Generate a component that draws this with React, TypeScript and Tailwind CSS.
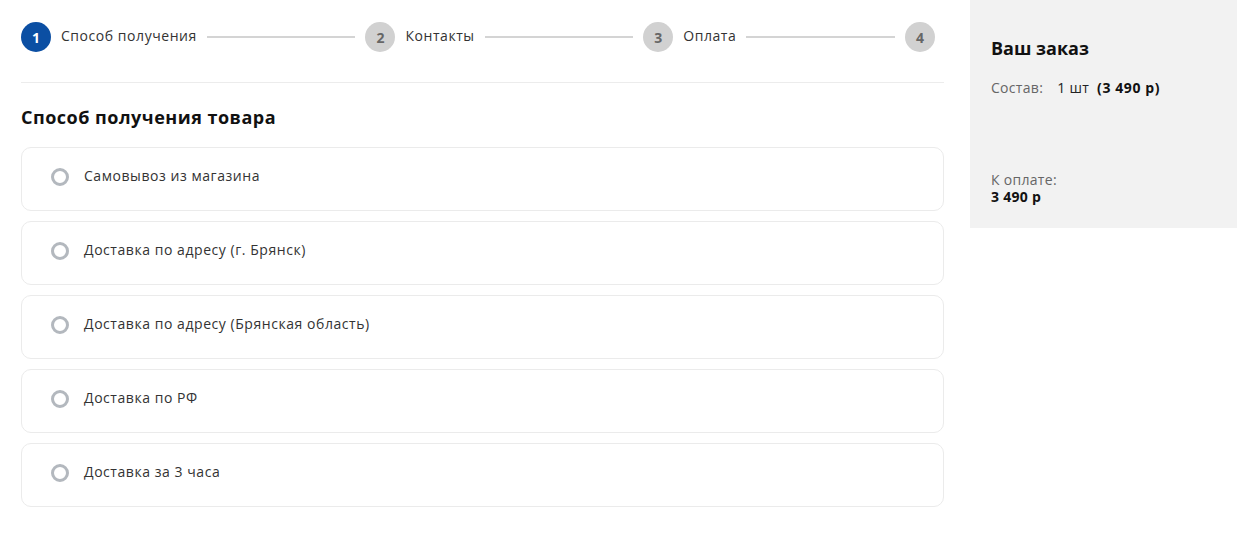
const steps = ["Способ получения", "Контакты", "Оплата"];

const options = [
  "Самовывоз из магазина",
  "Доставка по адресу (г. Брянск)",
  "Доставка по адресу (Брянская область)",
  "Доставка по РФ",
  "Доставка за 3 часа",
];

function StepCircle({ n, active }: { n: number; active?: boolean }) {
  return (
    <div
      className={
        active
          ? "w-[30px] h-[30px] shrink-0 rounded-full bg-[#0b4fa3] text-white flex items-center justify-center text-[14px] font-bold"
          : "w-[30px] h-[30px] shrink-0 rounded-full bg-[#d1d1d1] text-[#666] flex items-center justify-center text-[14px] font-bold"
      }
    >
      {n}
    </div>
  );
}

export default function App() {
  return (
    <div
      className="flex w-[1237px] h-[543px] bg-white text-[#222]"
      style={{ fontFamily: '"Open Sans", "Noto Sans", sans-serif' }}
    >
      {/* LEFT */}
      <div className="ml-[21px] w-[923px] shrink-0">
        {/* STEPPER */}
        <div className="mt-[22px] h-[30px] pr-[9px] flex items-center">
          {steps.map((s, i) => (
            <>
              <StepCircle key={"c" + s} n={i + 1} active={i === 0} />
              <span
                key={"t" + s}
                className="ml-[10px] pb-[4px] text-[14px] tracking-[0.55px] text-[#333] whitespace-nowrap"
              >
                {s}
              </span>
              <div key={"l" + s} className="flex-1 mx-[10px] h-[2px] bg-[#d4d4d4]" />
            </>
          ))}
          <StepCircle n={4} />
        </div>

        <div className="mt-[30px] border-t border-[#ececec]" />

        {/* TITLE */}
        <h2 className="mt-[22px] text-[18px] leading-[24px] font-bold tracking-[0.5px] text-[#111]">
          Способ получения товара
        </h2>

        {/* OPTIONS */}
        <div className="mt-[18px] flex flex-col gap-[10px]">
          {options.map((o) => (
            <label
              key={o}
              className="h-[64px] pb-[4px] border border-[#ebebeb] rounded-[10px] flex items-center pl-[29px] cursor-pointer"
            >
              <span className="w-[18px] h-[18px] rounded-full border-[3px] border-[#b3b8be] shrink-0" />
              <span className="ml-[15px] pb-[4px] text-[14px] tracking-[0.55px] text-[#333]">{o}</span>
            </label>
          ))}
        </div>
      </div>

      {/* ORDER */}
      <div className="ml-[26px] w-[267px] h-[228px] bg-[#f2f2f2] pl-[21px] pt-[36px]">
        <h3 className="text-[18px] leading-[24px] font-bold text-[#111]">Ваш заказ</h3>
        <div className="mt-[18px] text-[14px] leading-[20px] flex items-center tracking-[0.3px]">
          <span className="text-[#666]">Состав:</span>
          <span className="ml-[14px] text-[#222]">1 шт</span>
          <span className="ml-[8px] font-bold tracking-[0.6px] text-[#111]">(3 490 р)</span>
        </div>
        <div className="mt-[73px] text-[14px] leading-[17px] tracking-[0.3px] text-[#666]">К оплате:</div>
        <div className="text-[14px] leading-[17px] font-bold tracking-[0.3px] text-[#111]">3 490 р</div>
      </div>
    </div>
  );
}
